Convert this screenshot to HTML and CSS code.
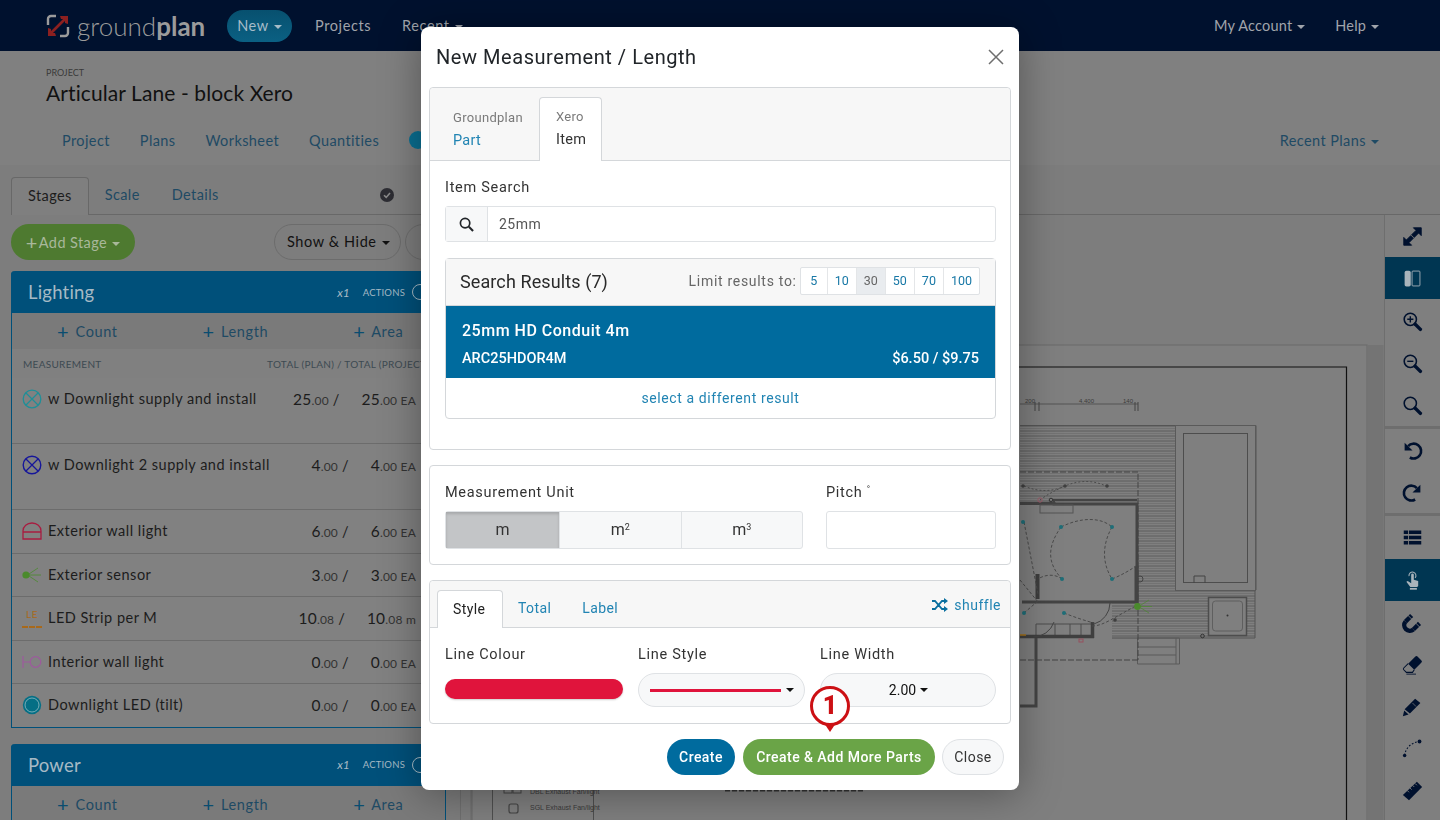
FILE: index.html
```html
<!DOCTYPE html>
<html lang="en">
<head>
<meta charset="utf-8">
<title>Groundplan - New Measurement</title>
<link rel="stylesheet" href="styles.css">
</head>
<body>

<div class="navbar">
  <a class="brand">
    <svg class="brand-mark" viewBox="0 0 24 24" width="24" height="24">
      <path d="M10 2H5a3 3 0 0 0-3 3v6M14 22h5a3 3 0 0 0 3-3v-6" fill="none" stroke="#9b9b9b" stroke-width="2.4"/>
      <path d="M3 21 21 3" stroke="#8c2020" stroke-width="2.6"/>
      <path d="M14 2h8v8l-3-1V5h-4zM10 22H2v-8l3 1v4h4z" fill="#8c2020"/>
    </svg>
    <span class="brand-light">ground</span><span class="brand-bold">plan</span>
  </a>
  <a class="nav-new">New <i class="caret"></i></a>
  <a class="nav-link">Projects</a>
  <a class="nav-link">Recent <i class="caret"></i></a>
  <div class="nav-right">
    <a class="nav-link">My Account <i class="caret"></i></a>
    <a class="nav-link">Help <i class="caret"></i></a>
  </div>
</div>

<div class="project-head">
  <div class="project-label">PROJECT</div>
  <div class="project-name">Articular Lane - block Xero</div>
  <div class="project-tabs">
    <a>Project</a><a>Plans</a><a>Worksheet</a><a>Quantities</a>
    <span class="xero-dot"></span>
    <a class="recent-plans">Recent Plans <i class="caret"></i></a>
  </div>
</div>

<div class="main">
  <div class="sidebar">
    <ul class="side-tabs">
      <li class="active">Stages</li>
      <li>Scale</li>
      <li>Details</li>
      <li class="side-check">
        <svg viewBox="0 0 14 14" width="14" height="14"><circle cx="7" cy="7" r="7" fill="#2d2d33"/><path d="M4 7.2 6.2 9.4 10 5" fill="none" stroke="#8a8a8a" stroke-width="1.6"/></svg>
      </li>
    </ul>
    <div class="side-tools">
      <a class="btn-stage"><span class="plus">+</span>Add Stage <i class="caret"></i></a>
      <a class="btn-show">Show &amp; Hide <i class="caret dark"></i></a>
      <a class="btn-show"></a>
    </div>

    <div class="stage">
      <div class="stage-head"><span class="stage-title">Lighting</span><em>x1</em><span class="stage-actions">ACTIONS</span><span class="stage-ring"></span></div>
      <div class="stage-add"><a><b>+</b> Count</a><a><b>+</b> Length</a><a><b>+</b> Area</a></div>
      <div class="stage-cols"><span>MEASUREMENT</span><span>TOTAL (PLAN) / TOTAL (PROJECT)</span></div>

      <div class="row tall">
        <svg class="row-icon" viewBox="0 0 20 20"><circle cx="10" cy="10" r="8.8" fill="none" stroke="#1e8f98" stroke-width="1.3"/><path d="M4 4l12 12M16 4 4 16" stroke="#1e8f98" stroke-width="1.2"/></svg>
        <span class="row-name">w Downlight supply and install</span>
        <span class="row-nums"><span><b>25</b><small>.00</small> /</span><span><b>25</b><small>.00 EA</small></span></span>
      </div>
      <div class="row tall">
        <svg class="row-icon" viewBox="0 0 20 20"><circle cx="10" cy="10" r="8.8" fill="none" stroke="#16169a" stroke-width="1.4"/><path d="M4 4l12 12M16 4 4 16" stroke="#16169a" stroke-width="1.3"/></svg>
        <span class="row-name">w Downlight 2 supply and install</span>
        <span class="row-nums"><span><b>4</b><small>.00</small> /</span><span><b>4</b><small>.00 EA</small></span></span>
      </div>
      <div class="row">
        <svg class="row-icon" viewBox="0 0 20 20"><path d="M1 18V10a9 8 0 0 1 18 0v8zM1 11h18" fill="none" stroke="#a81c40" stroke-width="1.3"/></svg>
        <span class="row-name">Exterior wall light</span>
        <span class="row-nums"><span><b>6</b><small>.00</small> /</span><span><b>6</b><small>.00 EA</small></span></span>
      </div>
      <div class="row">
        <svg class="row-icon" viewBox="0 0 20 20"><circle cx="4" cy="10" r="3.6" fill="#4a8a2c"/><path d="M6 10h13M7 9l9-6M7 11l9 6" stroke="#4a8a2c" stroke-width=".8"/></svg>
        <span class="row-name">Exterior sensor</span>
        <span class="row-nums"><span><b>3</b><small>.00</small> /</span><span><b>3</b><small>.00 EA</small></span></span>
      </div>
      <div class="row">
        <span class="le-icon">LE</span>
        <span class="row-name">LED Strip per M</span>
        <span class="row-nums"><span><b>10</b><small>.08</small> /</span><span><b>10</b><small>.08 m</small></span></span>
      </div>
      <div class="row">
        <svg class="row-icon" viewBox="0 0 20 20"><path d="M1 4v12M1 10h7" stroke="#9d5a9d" stroke-width="1.2"/><circle cx="13.5" cy="10" r="5.3" fill="none" stroke="#9d5a9d" stroke-width="1.2"/></svg>
        <span class="row-name">Interior wall light</span>
        <span class="row-nums"><span><b>0</b><small>.00</small> /</span><span><b>0</b><small>.00 EA</small></span></span>
      </div>
      <div class="row">
        <svg class="row-icon" viewBox="0 0 20 20"><circle cx="10" cy="10" r="9.2" fill="#056f85"/><circle cx="10" cy="10" r="7" fill="none" stroke="#a7c6cc" stroke-width=".7"/></svg>
        <span class="row-name">Downlight LED (tilt)</span>
        <span class="row-nums"><span><b>0</b><small>.00</small> /</span><span><b>0</b><small>.00 EA</small></span></span>
      </div>
    </div>

    <div class="stage">
      <div class="stage-head"><span class="stage-title">Power</span><em>x1</em><span class="stage-actions">ACTIONS</span><span class="stage-ring"></span></div>
      <div class="stage-add"><a><b>+</b> Count</a><a><b>+</b> Length</a><a><b>+</b> Area</a></div>
    </div>
  </div>

  <div class="work">
    <div class="plan-area">
      <svg class="plan" viewBox="461 215 923 605" preserveAspectRatio="none">
        <defs>
          <pattern id="hatch" width="10" height="5" patternUnits="userSpaceOnUse">
            <path d="M0 1h10" stroke="#5c5c5c" stroke-width="1"/>
            <path d="M0 3.5h10" stroke="#6e6e6e" stroke-width=".8"/>
          </pattern>
        </defs>
        <rect x="461" y="215" width="923" height="605" fill="#7d7d7d"/>
        <path d="M471 215v605" stroke="#6f6f6f"/>
        <rect x="472" y="345" width="895" height="480" fill="#7f7f7f" stroke="#6a6a6a"/>
        <rect x="1367.500" y="345" width="16" height="475" fill="#747474"/>
        <path d="M480 367H1346.500V830" fill="none" stroke="#111" stroke-width="1.200"/>

        <path d="M1020 404h118" stroke="#555" stroke-width="1.100"/>
        <path d="M1035 402v9M1039 402v9M1135 402v9M1138 402v9" stroke="#444"/>
        <text class="plan-dim" x="1025" y="403">200</text>
        <text class="plan-dim" x="1079" y="403">4,400</text>
        <text class="plan-dim" x="1123" y="403">140</text>

        <rect x="1020" y="425.500" width="155" height="213" fill="url(#hatch)"/>
        <rect x="1175" y="590" width="80" height="48" fill="url(#hatch)"/>
        <path d="M1020 425.500h236V590h-1v48h-235" fill="none" stroke="#555" stroke-width="1"/>
        <rect x="1175.500" y="425.500" width="80" height="165" fill="#7f7f7f" stroke="#5a5a5a"/>
        <rect x="1183.500" y="433.500" width="64" height="149" fill="none" stroke="#4d4d4d"/>
        <path d="M1194 583v-7h11v7" fill="none" stroke="#444"/>
        <rect x="1208.500" y="597.500" width="38" height="38" fill="#7f7f7f" stroke="#4d4d4d" stroke-width="1.500"/>
        <rect x="1212.500" y="601" width="30" height="30" rx="3" fill="#7f7f7f" stroke="#5f5f5f"/>
        <circle cx="1227.500" cy="615.500" r="1" fill="#333"/>
        <path d="M1137.500 638h42v26h-42zM1176 638v26M1137 647h39M1137 655h39" fill="none" stroke="#5a5a5a"/>
        <rect x="1020" y="503" width="117" height="98" fill="#7f7f7f"/>
        <rect x="1020" y="600" width="92" height="40" fill="#7f7f7f"/>

        <path d="M1020 503.500h34V504h83v98h-115" fill="none" stroke="#444" stroke-width="3"/>
        <path d="M1137 500h-83v5" fill="none" stroke="#444" stroke-width="2"/>
        <rect x="1040" y="505" width="33" height="8" fill="none" stroke="#555"/>
        <path d="M1037.500 574v25" stroke="#3d3d3d" stroke-width="4"/>
        <path d="M1136.500 566v36" stroke="#444" stroke-width="4"/>
        <path d="M1036 624h57v12h-57zM1055 624v12M1070 624v12M1081 624v12" fill="none" stroke="#4d4d4d"/>
        <path d="M1020 636.500h74" stroke="#3f3f3f" stroke-width="3.500"/>
        <path d="M1092.500 622v16" stroke="#3f3f3f" stroke-width="3.500"/>
        <path d="M1036 638v68H1020" fill="none" stroke="#444" stroke-width="3"/>
        <path d="M1020 472h118v188M1020 660h118" fill="none" stroke="#444" stroke-dasharray="6 2"/>
        <path d="M1024 486c14 6 28 6 41 0c14-6 28-6 41 0M1040 500c8-6 16-10 25-14" fill="none" stroke="#4d4d4d" stroke-dasharray="2 2"/>
        <g fill="none" stroke="#4a4a4a" stroke-dasharray="3 2">
          <path d="M1061 527c20-10 40-10 51 0M1061 527c-14 20-14 36 1 52M1112 527c-10 18-10 36 0 52M1112 579c10-4 20-10 24-13"/>
          <path d="M1024 522l14 72M1062 579c-8-6-18-4-24 0M1020 580l18 22M1024 613l14-12M1064 613c10 4 22 8 30 10M1092 626c12 0 24-10 44-20"/>
        </g>
        <path d="M1054 622a22 22 0 0 1-21 15M1110 603a22 22 0 0 1-16 21" fill="none" stroke="#444"/>
        <g fill="#1f6e78">
          <circle cx="1061" cy="527" r="2"/><circle cx="1112" cy="527" r="2"/><circle cx="1062" cy="579" r="2"/><circle cx="1112" cy="579" r="2"/><circle cx="1023" cy="522" r="2"/><circle cx="1024" cy="613" r="2"/><circle cx="1064" cy="613" r="2"/>
        </g>
        <g fill="#3f3f3f"><circle cx="1023" cy="486" r="1.800"/><circle cx="1065" cy="486" r="1.800"/><circle cx="1107" cy="486" r="1.800"/><circle cx="1115" cy="620" r="1.800"/></g>
        <circle cx="1040" cy="500" r="2.200" fill="none" stroke="#9a5a68"/>
        <circle cx="1051" cy="500" r="1.800" fill="none" stroke="#333"/>
        <rect x="1079" y="639" width="4" height="3" fill="none" stroke="#96505e"/>
        <path d="M1020 635h6" stroke="#a8741a" stroke-width="1.500"/>
        <circle cx="1140" cy="579" r="3" fill="none" stroke="#444"/>
        <circle cx="1137.500" cy="606.500" r="3.400" fill="#4a8a2c"/>
        <path d="M1140 606.500h12M1141 605l8-5M1141 608l8 5" stroke="#4a8a2c" stroke-width=".7"/>
        <circle cx="1202.500" cy="636" r="1.800" fill="none" stroke="#333"/>

        <rect x="492.500" y="700" width="101" height="130" fill="#7f7f7f" stroke="#4f4f4f"/>
        <rect x="504" y="787" width="8" height="6" fill="none" stroke="#444"/>
        <rect x="513" y="787" width="8" height="6" fill="none" stroke="#444"/>
        <text class="plan-key" x="530" y="794">DBL Exhaust Fan/light</text>
        <rect x="509" y="804" width="9" height="9" rx="2" fill="none" stroke="#444" stroke-width="1.200"/>
        <text class="plan-key" x="530" y="810">SGL Exhaust Fan/light</text>
        <path d="M725 790.500h138" stroke="#333" stroke-width="2" stroke-dasharray="5 2"/>
      </svg>
    </div>

    <div class="tools">
      <a class="tool"><svg viewBox="0 0 24 24"><path d="M13 2h9v9l-3-3-5 5-3-3 5-5zM11 22H2v-9l3 3 5-5 3 3-5 5z"/></svg></a>
      <a class="tool active"><svg viewBox="0 0 24 24"><rect x="3" y="3" width="7" height="18" rx="2" fill="#a9b4bb" stroke="none"/><rect x="11.500" y="3.500" width="9" height="17" rx="1" fill="none" stroke="#a9b4bb"/></svg></a>
      <a class="tool gap"><svg viewBox="0 0 24 24"><circle cx="9.500" cy="9.500" r="7" fill="none" stroke-width="1.800"/><path d="M15 15l6 6" stroke-width="4" stroke-linecap="round"/><path d="M9.500 6v7M6 9.500h7" stroke-width="1.600"/></svg></a>
      <a class="tool"><svg viewBox="0 0 24 24"><circle cx="9.500" cy="9.500" r="7" fill="none" stroke-width="1.800"/><path d="M15 15l6 6" stroke-width="4" stroke-linecap="round"/><path d="M6 9.500h7" stroke-width="1.600"/></svg></a>
      <a class="tool"><svg viewBox="0 0 24 24"><circle cx="9.500" cy="9.500" r="7" fill="none" stroke-width="1.800"/><path d="M15 15l6 6" stroke-width="4" stroke-linecap="round"/></svg></a>
      <div class="tool-sep"></div>
      <a class="tool"><svg viewBox="0 0 24 24"><path d="M7 7A8.500 8.500 0 1 1 9 20" fill="none" stroke-width="3"/><path d="M3 3v9h9z" stroke="none"/></svg></a>
      <a class="tool"><svg viewBox="0 0 24 24"><path d="M17 7A8.500 8.500 0 1 0 15 20" fill="none" stroke-width="3"/><path d="M21 3v9h-9z" stroke="none"/></svg></a>
      <div class="tool-sep"></div>
      <a class="tool"><svg viewBox="0 0 24 24"><path d="M2 4h5v4H2zM8 4h14v4H8zM2 10h5v4H2zM8 10h14v4H8zM2 16h5v4H2zM8 16h14v4H8z" stroke="none"/></svg></a>
      <a class="tool active gap"><svg viewBox="0 0 24 24"><path d="M8 7a4 4 0 1 1 7 2" fill="none" stroke="#a9b4bb" stroke-width="1.200"/><path d="M10.500 5.500a1.500 1.500 0 0 1 3 0V11l5 1.500V18l-1 1.500H9.500L5 13.500l1.500-1 4 2.500z" fill="#a9b4bb" stroke="none"/><path d="M9 20.500h8v2H9z" fill="#a9b4bb" stroke="none"/></svg></a>
      <a class="tool"><svg viewBox="0 0 24 24"><path d="M4 11l7-7M13 20l7-7" fill="none" stroke-width="5"/><path d="M4 11a6.400 6.400 0 0 0 9 9" fill="none" stroke-width="5"/><path d="M6.500 3.500l5 5M15.500 12.500l5 5" stroke="#7f7f7f" stroke-width="1"/></svg></a>
      <a class="tool"><svg viewBox="0 0 24 24"><path d="M15 3a2 2 0 0 1 3 0l4 4a2 2 0 0 1 0 3l-8 8-7-7z" stroke="none"/><path d="M7 11l-5 5a1.500 1.500 0 0 0 0 2l3 3h7l2-3" fill="none" stroke-width="1.200"/><path d="M5 23h11" stroke-width="1"/></svg></a>
      <a class="tool"><svg viewBox="0 0 24 24"><path d="M15 3l6 5L9 20l-6-5zM2.500 16.500 7.500 21 1 23z" stroke="none"/><path d="M12 8l4 4" stroke="#7f7f7f" stroke-width=".8"/></svg></a>
      <a class="tool"><svg viewBox="0 0 24 24"><path d="M3 20C4 11 11 5 20 4" fill="none" stroke-width="1.200" stroke-dasharray="2 2"/><circle cx="3" cy="20" r="2" stroke="none"/><circle cx="20" cy="4" r="2.200" stroke="none"/></svg></a>
      <a class="tool"><svg viewBox="0 0 24 24"><path d="M1 17 17 2l6 6L8 23z" stroke="none"/><path d="M6 12l2 2M9 9l2 2M12 6l2 2M15 4l2 2" stroke="#7f7f7f" stroke-width="1"/></svg></a>
    </div>
  </div>
</div>

<div class="modal">
  <div class="modal-head">
    <h4>New Measurement / Length</h4>
    <svg class="modal-close" viewBox="0 0 16 16" width="16" height="16"><path d="M1 1l14 14M15 1 1 15" stroke="#6e6e6e" stroke-width="1.500"/></svg>
  </div>

  <div class="card card-search">
    <div class="source-tabs">
      <a class="source-tab"><small>Groundplan</small><span class="link">Part</span></a>
      <a class="source-tab active"><small>Xero</small><span>Item</span></a>
    </div>
    <div class="card-body">
      <label>Item Search</label>
      <div class="search-group">
        <span class="search-addon"><svg viewBox="0 0 16 16" width="15" height="15"><circle cx="6.500" cy="6.500" r="5" fill="none" stroke="#212529" stroke-width="1.800"/><path d="M10.500 10.500 15 15" stroke="#212529" stroke-width="2.200"/></svg></span>
        <span class="search-value">25mm</span>
      </div>
      <div class="results">
        <div class="results-head">
          <span class="results-title">Search Results (7)</span>
          <span class="limit-label">Limit results to:</span>
          <div class="limits"><a>5</a><a>10</a><a class="active">30</a><a>50</a><a>70</a><a>100</a></div>
        </div>
        <div class="result-item">
          <div class="result-name">25mm HD Conduit 4m</div>
          <div class="result-meta"><span>ARC25HDOR4M</span><span>$6.50 / $9.75</span></div>
        </div>
        <a class="result-other">select a different result</a>
      </div>
    </div>
  </div>

  <div class="card card-unit">
    <div class="unit-col">
      <label>Measurement Unit</label>
      <div class="units"><a class="active">m</a><a>m<sup>2</sup></a><a>m<sup>3</sup></a></div>
    </div>
    <div class="pitch-col">
      <label>Pitch <sup>°</sup></label>
      <div class="pitch-input"></div>
    </div>
  </div>

  <div class="card card-style">
    <div class="style-tabs">
      <a class="active">Style</a><a>Total</a><a>Label</a>
      <span class="shuffle">
        <svg viewBox="0 0 16 14" width="16" height="14"><path d="M0 3h3l7 8h3M0 11h3l7-8h3" fill="none" stroke="#0a6f9f" stroke-width="1.800"/><path d="M12 0l4 3-4 3zM12 8l4 3-4 3z" fill="#0a6f9f"/></svg>
        shuffle
      </span>
    </div>
    <div class="style-body">
      <div class="style-col col-colour"><label>Line Colour</label><div class="colour-bar"></div></div>
      <div class="style-col col-line"><label>Line Style</label><div class="select-pill"><span class="line-sample"></span><i class="caret dark"></i></div></div>
      <div class="style-col col-width"><label>Line Width</label><div class="select-pill center">2.00 <i class="caret dark"></i></div></div>
    </div>
  </div>

  <div class="modal-foot">
    <a class="btn btn-blue">Create</a>
    <a class="btn btn-green">Create &amp; Add More Parts</a>
    <a class="btn btn-light">Close</a>
  </div>

  <div class="marker">1</div>
</div>

</body>
</html>
```

FILE: styles.css
```css
html, body {
  margin: 0;
  height: 100%;
  overflow: hidden;
}
body {
  display: flex;
  flex-direction: column;
  background: #7f7f7f;
  font-family: "Lato", "Liberation Sans", sans-serif;
  font-size: 14px;
  color: #1c1c1c;
}
a { text-decoration: none; }

.caret {
  display: inline-block;
  width: 0;
  height: 0;
  margin-left: 1px;
  vertical-align: 2px;
  border-top: 4px solid currentColor;
  border-left: 4px solid transparent;
  border-right: 4px solid transparent;
}
.caret.dark { color: #111; }

/* top bar */
.navbar {
  height: 51px;
  flex: none;
  display: flex;
  align-items: center;
  background: #00112e;
  color: #a0a4ab;
  padding: 0 61px 0 46px;
  letter-spacing: .6px;
  font-size: 14.500px;
}
.brand {
  display: flex;
  align-items: center;
  width: 181px;
  font-size: 26px;
  letter-spacing: 0;
  color: #9b9b9b;
}
.brand-mark { margin-right: 7px; }
.brand-light { font-weight: 300; }
.brand-bold { font-weight: 700; }
.nav-new {
  height: 32px;
  line-height: 31px;
  width: 65px;
  text-align: center;
  border-radius: 16px;
  color: #a6bcc8;
  background: linear-gradient(#07506f, #0b6083);
  margin-right: 23px;
}
.nav-link {
  color: #a0a4ab;
  margin-right: 31px;
}
.nav-right {
  margin-left: auto;
  display: flex;
  letter-spacing: .2px;
}
.nav-right .nav-link { margin-right: 30px; }
.nav-right .nav-link:last-child { margin-right: 0; }

/* project header */
.project-head {
  height: 114px;
  flex: none;
  box-sizing: border-box;
  padding: 16px 0 0 46px;
  background: #808080;
}
.project-label {
  font-size: 9px;
  line-height: 12px;
  color: #3a3a3a;
}
.project-name {
  font-size: 21px;
  line-height: 26px;
  margin-top: 1px;
  color: #111;
  letter-spacing: .1px;
}
.project-tabs {
  display: flex;
  align-items: center;
  margin-top: 25px;
  padding-left: 16px;
  padding-right: 61px;
  font-size: 14.500px;
  letter-spacing: .4px;
}
.project-tabs a {
  color: #1f4a64;
  margin-right: 30px;
}
.project-tabs .recent-plans {
  margin: 0 0 0 auto;
}
.xero-dot {
  width: 18px;
  height: 18px;
  border-radius: 9px;
  background: #0a6f91;
}

/* page body */
.main {
  flex: 1;
  display: flex;
  min-height: 0;
  background: #7d7d7d;
}
.sidebar {
  width: 461px;
  box-sizing: border-box;
  padding: 0 14px 0 11px;
  border-right: 1px solid #6f6f6f;
  flex: none;
}
.side-tabs {
  list-style: none;
  margin: 12px -14px 0 0;
  padding: 0;
  display: flex;
  height: 38px;
  border-bottom: 1px solid #686868;
  box-sizing: border-box;
  font-size: 14.500px;
  letter-spacing: .4px;
}
.side-tabs li {
  padding: 9px 16px 0;
  color: #1f4a64;
}
.side-tabs li.active {
  height: 38px;
  box-sizing: border-box;
  color: #1c1c1c;
  background: #7f7f7f;
  border: 1px solid #686868;
  border-bottom: 0;
  border-radius: 4px 4px 0 0;
}
.side-tabs .side-check {
  margin-left: auto;
  padding: 11px 0 0;
  margin-right: 66px;
  line-height: 0;
}
.side-tools {
  display: flex;
  margin-top: 9px;
  height: 36px;
  font-size: 14.500px;
  letter-spacing: .6px;
}
.btn-stage {
  width: 124px;
  flex: none;
  height: 36px;
  line-height: 36px;
  text-align: center;
  border-radius: 18px;
  background: #4e7a30;
  color: #a9b89b;
  margin-right: 139px;
  white-space: nowrap;
  letter-spacing: .4px;
}
.plus {
  font-size: 20px;
  vertical-align: -2px;
  margin-right: 1px;
}
.btn-show {
  flex: none;
  height: 34px;
  line-height: 34px;
  padding: 0 10px 0 12px;
  margin-right: 4px;
  border: 1px solid #6c6c6c;
  border-radius: 18px;
  white-space: nowrap;
  min-width: 40px;
  color: #111;
}
.stage {
  margin-top: 11px;
  border: 1px solid #00507a;
  border-top: 0;
  border-radius: 4px 4px 0 0;
  background: #808080;
  margin-bottom: 16px;
}
.stage-head {
  height: 42px;
  margin: 0 -1px;
  background: #00507a;
  border-radius: 4px 4px 0 0;
  display: flex;
  align-items: center;
  color: #a6bac5;
  padding: 0 18px 0 17px;
}
.stage-title {
  font-size: 18.500px;
  flex: 1;
  letter-spacing: .2px;
}
.stage-head em {
  font-size: 12px;
  margin-right: 13px;
}
.stage-actions {
  font-size: 9.500px;
  margin-right: 7px;
  letter-spacing: .2px;
}
.stage-ring {
  width: 14px;
  height: 14px;
  border: 1px solid #a6bac5;
  border-radius: 50%;
}
.stage-add {
  display: flex;
  height: 36px;
  align-items: center;
  background: #7a7a7a;
  color: #1f4a64;
  font-size: 14.500px;
  letter-spacing: .6px;
}
.stage-add a {
  color: #1f4a64;
  white-space: nowrap;
}
.stage-add a:nth-child(1) { margin-left: 45px; }
.stage-add a:nth-child(2) { margin-left: 85px; }
.stage-add a:nth-child(3) { margin-left: 85px; }
.stage-add b {
  font-weight: 400;
  font-size: 20px;
  vertical-align: -2px;
  color: #0a4d70;
  margin-right: 2px;
}
.stage-cols {
  display: flex;
  height: 29px;
  line-height: 30px;
  padding-left: 11px;
  font-size: 10px;
  letter-spacing: .3px;
  color: #3d4a52;
  white-space: nowrap;
}
.stage-cols span:last-child {
  position: absolute;
  left: 267px;
}
.row {
  height: 43.500px;
  box-sizing: border-box;
  padding: 11px 29px 0 10px;
  display: flex;
  align-items: flex-start;
  border-top: 1px solid #6c6c6c;
  white-space: nowrap;
  background: #818181;
  font-size: 14.500px;
  letter-spacing: .5px;
}
.stage-cols + .row {
  border-top: 0;
  padding-top: 11px;
}
.row.tall { height: 66px; }
.stage-cols + .row.tall { height: 65px; }
.row-icon {
  width: 20px;
  height: 20px;
  flex: none;
  margin-right: 6px;
}
.le-icon {
  width: 20px;
  height: 20px;
  box-sizing: border-box;
  flex: none;
  margin-right: 6px;
  text-align: center;
  font-size: 10px;
  line-height: 13px;
  color: #a8691a;
  border-bottom: 2px dashed #a8691a;
}
.row-name {
  flex: 1;
  line-height: 20px;
  color: #1c1c1c;
}
.row-nums {
  display: flex;
  gap: 22px;
  line-height: 20px;
  letter-spacing: .2px;
}
.row-nums b {
  font-weight: 400;
  font-size: 15.500px;
}
.row-nums small {
  font-size: 12px;
  color: #333;
}

/* plan */
.work {
  flex: 1;
  min-width: 0;
  display: flex;
  margin-top: 49px;
  border-top: 1px solid #686868;
}
.plan-area {
  flex: 1;
  min-width: 0;
}
.plan {
  display: block;
  width: 100%;
  height: 100%;
}
.plan-dim {
  font-size: 6px;
  fill: #3a3a3a;
  font-family: "Liberation Sans", sans-serif;
}
.plan-key {
  font-size: 7px;
  fill: #3a3a3a;
  font-family: "Liberation Sans", sans-serif;
}

/* right hand tools */
.tools {
  width: 56px;
  flex: none;
  background: #7f7f7f;
  border-left: 1px solid #6e6e6e;
  box-sizing: border-box;
  display: flex;
  flex-direction: column;
}
.tool {
  height: 42px;
  flex: none;
  display: flex;
  align-items: center;
  padding-left: 17px;
}
.tool svg {
  width: 21px;
  height: 21px;
  fill: #00112e;
  stroke: #00112e;
}
.tool.active { background: #003652; }
.tool.gap { margin-top: 1px; }
.tool-sep {
  height: 3px;
  flex: none;
  background: #6e6e6e;
}

/* modal */
.modal {
  position: fixed;
  left: 421px;
  top: 27px;
  width: 598px;
  height: 763px;
  box-sizing: border-box;
  padding: 0 8px;
  background: #fff;
  border-radius: 8px;
  box-shadow: 0 4px 40px rgba(0, 0, 0, .35);
  font-family: "Roboto", "Liberation Sans", sans-serif;
  color: #333;
}
.modal-head {
  height: 60px;
  display: flex;
  align-items: center;
  justify-content: space-between;
  padding: 0 7px;
}
.modal-head h4 {
  margin: 0;
  font-size: 20px;
  font-weight: 400;
  color: #212529;
  letter-spacing: .55px;
}
.card {
  border: 1px solid #d4d7da;
  border-radius: 4px;
  box-sizing: border-box;
}
.card label {
  display: block;
  font-size: 14.500px;
  line-height: 18px;
  color: #333;
  letter-spacing: .7px;
}
.card-search { height: 363px; }
.source-tabs {
  height: 73px;
  box-sizing: border-box;
  background: #f7f7f7;
  border-bottom: 1px solid #d4d7da;
  padding: 9px 0 0 7px;
  display: flex;
  border-radius: 4px 4px 0 0;
}
.source-tab {
  display: flex;
  flex-direction: column;
  padding: 13px 16px 0;
  height: 64px;
  box-sizing: border-box;
  font-size: 14.500px;
  letter-spacing: .3px;
}
.source-tab small {
  font-size: 13px;
  color: #7a7a7a;
  line-height: 16px;
  margin-bottom: 6px;
  letter-spacing: .3px;
}
.source-tab .link { color: #2184b3; }
.source-tab.active {
  padding: 11px 15px 0 16px;
  background: #fff;
  border: 1px solid #d4d7da;
  border-bottom: 0;
  border-radius: 4px 4px 0 0;
}
.card-body { padding: 18px 14px 0 15px; }
.search-group {
  display: flex;
  height: 36px;
  margin-top: 9px;
  border: 1px solid #dfe2e5;
  border-radius: 3px;
  box-sizing: border-box;
}
.search-addon {
  width: 41px;
  background: #f7f8f9;
  border-right: 1px solid #dfe2e5;
  display: flex;
  align-items: center;
  justify-content: center;
}
.search-value {
  line-height: 34px;
  padding-left: 11px;
  color: #555;
  letter-spacing: .5px;
}
.results {
  margin-top: 16px;
  border: 1px solid #d4d7da;
  border-radius: 4px;
  height: 161px;
  box-sizing: border-box;
}
.results-head {
  height: 47px;
  box-sizing: border-box;
  display: flex;
  align-items: center;
  padding: 0 15px 2px 14px;
  background: #f7f7f7;
  border-bottom: 1px solid #d4d7da;
}
.results-title {
  font-size: 18px;
  color: #2a2a2a;
  flex: 1;
  letter-spacing: .1px;
}
.limit-label {
  color: #666;
  letter-spacing: .7px;
  margin-right: 3px;
}
.limits {
  display: flex;
  height: 28px;
  box-sizing: border-box;
  border: 1px solid #dfe2e5;
  border-radius: 2px;
  background: #fff;
  font-size: 12.500px;
  color: #1878a6;
}
.limits a {
  padding: 0 7px;
  line-height: 26px;
  border-left: 1px solid #e4e6e8;
  min-width: 12px;
  text-align: center;
}
.limits a:first-child { border-left: 0; }
.limits a.active {
  background: #e9ecef;
  color: #666;
}
.result-item {
  height: 72px;
  box-sizing: border-box;
  background: #006b9e;
  color: #fff;
  padding: 15px 16px 0 16px;
}
.result-name {
  font-size: 16px;
  font-weight: 500;
  line-height: 20px;
  letter-spacing: .5px;
}
.result-meta {
  display: flex;
  justify-content: space-between;
  margin-top: 8px;
  line-height: 20px;
  font-size: 14.500px;
  font-weight: 500;
}
.result-other {
  display: block;
  text-align: center;
  line-height: 40px;
  color: #2184b3;
  letter-spacing: .6px;
}
.card-unit {
  height: 100px;
  margin-top: 15px;
  padding: 18px 14px 0 15px;
  display: flex;
  justify-content: space-between;
}
.unit-col { width: 358px; }
.pitch-col { width: 170px; }
.units {
  display: flex;
  height: 38px;
  margin-top: 9px;
  box-sizing: border-box;
  border: 1px solid #dfe2e5;
  border-radius: 3px;
  background: #f7f8f9;
  color: #333;
}
.units a {
  flex: 1;
  text-align: center;
  line-height: 36px;
  font-size: 16px;
  color: #333;
  border-left: 1px solid #dfe2e5;
}
.units a:first-child {
  flex: none;
  width: 113px;
  border-left: 0;
  background: #c3c5c7;
  box-shadow: inset 0 2px 3px rgba(0, 0, 0, .15);
}
.units sup,
.pitch-col sup {
  font-size: 9px;
  line-height: 0;
  vertical-align: 5px;
}
.pitch-input {
  height: 38px;
  margin-top: 9px;
  box-sizing: border-box;
  border: 1px solid #dfe2e5;
  border-radius: 3px;
}
.card-style {
  height: 144px;
  margin-top: 15px;
}
.style-tabs {
  height: 47px;
  box-sizing: border-box;
  display: flex;
  padding: 9px 9px 0 7px;
  background: #f7f7f7;
  border-bottom: 1px solid #d4d7da;
  border-radius: 4px 4px 0 0;
}
.style-tabs a {
  padding: 0 16px 0 15px;
  line-height: 36px;
  color: #2184b3;
  letter-spacing: .4px;
}
.style-tabs a.active {
  height: 38px;
  box-sizing: border-box;
  width: 66px;
  color: #222;
  background: #fff;
  border: 1px solid #d4d7da;
  border-bottom: 0;
  border-radius: 4px 4px 0 0;
}
.shuffle {
  margin-left: auto;
  display: flex;
  align-items: center;
  gap: 6px;
  height: 30px;
  color: #2184b3;
  letter-spacing: .5px;
}
.style-body {
  display: flex;
  padding: 18px 14px 0 15px;
}
.style-col label { margin-bottom: 9px; }
.col-colour { width: 178px; margin-right: 15px; }
.col-line { width: 167px; margin-right: 15px; }
.col-width { width: 176px; }
.colour-bar {
  height: 20px;
  margin-top: 15px;
  border-radius: 10px;
  background: #e0143c;
  box-shadow: 0 1px 2px rgba(0, 0, 0, .2);
}
.select-pill {
  height: 34px;
  box-sizing: border-box;
  display: flex;
  align-items: center;
  padding: 0 10px 0 11px;
  border: 1px solid #dfe2e5;
  border-radius: 17px;
  background: #f7f8f9;
  color: #111;
}
.select-pill.center {
  justify-content: center;
  gap: 3px;
}
.line-sample {
  flex: 1;
  height: 3px;
  background: #e0143c;
  margin-right: 4px;
}
.modal-foot {
  display: flex;
  justify-content: flex-end;
  gap: 8px;
  margin-top: 15px;
  padding-right: 7px;
}
.btn {
  height: 36px;
  box-sizing: border-box;
  line-height: 36px;
  text-align: center;
  border-radius: 18px;
  font-size: 14px;
  font-weight: 500;
  letter-spacing: .45px;
  color: #fff;
}
.btn-blue { width: 68px; background: #006b9e; }
.btn-green { width: 192px; background: #6aa447; margin-right: -1px; }
.btn-light {
  width: 62px;
  line-height: 34px;
  font-weight: 400;
  background: #f7f8f9;
  border: 1px solid #dfe2e5;
  color: #333;
}

/* callout */
.marker {
  position: absolute;
  left: 389px;
  top: 659px;
  width: 40px;
  height: 40px;
  box-sizing: border-box;
  border: 3px solid #cc1014;
  border-radius: 50%;
  background: #fff;
  color: #cc1014;
  font-size: 25px;
  font-weight: 900;
  line-height: 33px;
  text-align: center;
}
.marker:after {
  content: "";
  position: absolute;
  left: 11px;
  top: 34px;
  border-top: 9px solid #cc1014;
  border-left: 6px solid transparent;
  border-right: 6px solid transparent;
}
```
